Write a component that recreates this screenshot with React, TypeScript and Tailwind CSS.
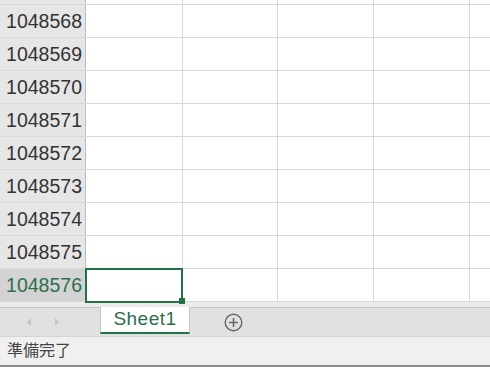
import React from 'react';

const rows = [1048568, 1048569, 1048570, 1048571, 1048572, 1048573, 1048574, 1048575, 1048576];
const colWidths = ['w-[97px]', 'w-[95px]', 'w-[96px]', 'w-[96px]'];

const Row: React.FC<{ num: number; active: boolean }> = ({ num, active }) => (
    <div className="flex h-[33px] border-b border-[#d9d9d9]">
        <div
            className={
                active
                    ? 'w-[86px] shrink-0 border-r border-[#bdbdbd] bg-[#d3d3d3] text-[#2e6e4a] text-right pr-[3px] leading-[32px] text-[19.5px]'
                    : 'w-[86px] shrink-0 border-r border-[#bdbdbd] bg-[#e6e6e6] text-[#333] text-right pr-[3px] leading-[32px] text-[19.5px]'
            }
        >
            {num}
        </div>
        {colWidths.map((w, i) => (
            <div key={i} className={`${w} shrink-0 border-r border-[#d9d9d9] bg-white`} />
        ))}
        <div className="flex-1 bg-white" />
    </div>
);

const App: React.FC = () => {
    return (
        <div
            className="w-[490px] h-[367px] overflow-hidden flex flex-col bg-white select-none"
            style={{ fontFamily: '"Liberation Sans", "Noto Sans CJK JP", sans-serif' }}
        >
            {/* grid */}
            <div className="relative h-[302px] shrink-0">
                <div className="flex h-[5px] border-b border-[#d9d9d9]">
                    <div className="w-[86px] shrink-0 border-r border-[#bdbdbd] bg-[#e6e6e6]" />
                    {colWidths.map((w, i) => (
                        <div key={i} className={`${w} shrink-0 border-r border-[#d9d9d9]`} />
                    ))}
                    <div className="flex-1" />
                </div>
                {rows.map((n) => (
                    <Row key={n} num={n} active={n === 1048576} />
                ))}
                {/* selected cell */}
                <div className="absolute left-[85px] top-[268px] w-[98px] h-[35px] border-2 border-[#217346]" />
                <div className="absolute left-[179px] top-[298px] w-[6px] h-[6px] bg-[#217346]" />
            </div>

            {/* sheet tabs */}
            <div className="h-[5px] shrink-0 bg-[#ececec]" />
            <div className="flex h-[30px] shrink-0 bg-[#e1e1e1] border-t border-[#c6c6c6] border-b border-b-[#d4d4d4]">
                <div className="w-[100px] shrink-0 flex items-center">
                    <svg width="6" height="10" viewBox="0 0 6 10" className="ml-[26px]">
                        <path d="M5 1 L1 5 L5 9 Z" fill="#c4c4c4" />
                    </svg>
                    <svg width="6" height="10" viewBox="0 0 6 10" className="ml-[22px]">
                        <path d="M1 1 L5 5 L1 9 Z" fill="#c4c4c4" />
                    </svg>
                </div>
                <div className="w-[90px] shrink-0 -mt-px h-[27px] bg-white border-x border-[#c6c6c6] border-b-2 border-b-[#217346] flex items-center justify-center text-[19px] tracking-[0.5px] text-[#2e6e4a]">
                    Sheet1
                </div>
                <div className="flex items-center ml-[34px]">
                    <svg width="19" height="19" viewBox="0 0 19 19">
                        <circle cx="9.5" cy="9.5" r="8.3" fill="none" stroke="#666" strokeWidth="1.4" />
                        <path d="M9.5 5 V14 M5 9.5 H14" stroke="#666" strokeWidth="1.5" />
                    </svg>
                </div>
            </div>

            {/* status bar */}
            <div className="flex-1 bg-[#f0f0f0] border-b-2 border-[#8c8c8c] flex items-center pl-[7px] text-[16px] text-[#444]">
                準備完了
            </div>
        </div>
    );
};

export default App;
